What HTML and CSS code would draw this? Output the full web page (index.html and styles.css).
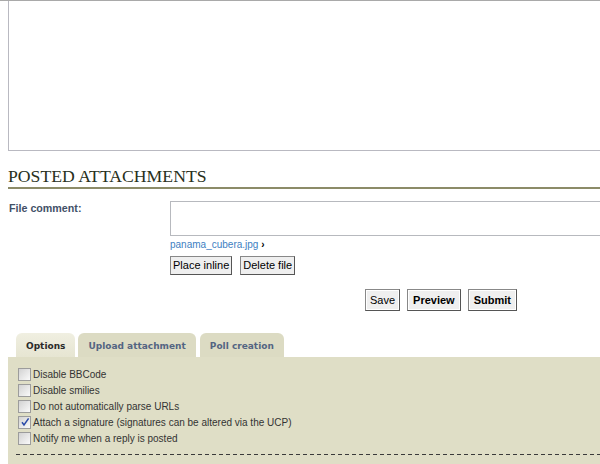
FILE: index.html
```html
<!DOCTYPE html>
<html lang="en">
<head>
  <meta charset="UTF-8" />
  <title>Post a reply</title>
  <link rel="stylesheet" href="styles.css">
</head>
<body>

<div class="top-rule"></div>

<div class="wrap">
  <textarea class="message" aria-label="Message body"></textarea>

  <h3 class="att-title">POSTED ATTACHMENTS</h3>

  <div class="att-row">
    <label class="att-label" for="comment">File comment:</label>
    <div class="att-field">
      <textarea id="comment" class="att-comment"></textarea>
      <div class="att-file">
        <a href="#">panama_cubera.jpg</a>
        <span class="att-arrow">&#x203A;</span>
      </div>
      <div class="att-buttons">
        <button class="btn-small">Place inline</button>
        <button class="btn-small">Delete file</button>
      </div>
    </div>
  </div>

  <div class="submit-buttons">
    <button class="btn">Save</button>
    <button class="btn bold">Preview</button>
    <button class="btn bold">Submit</button>
  </div>

  <ul class="tabs">
    <li class="tab active"><a href="#">Options</a></li>
    <li class="tab"><a href="#">Upload attachment</a></li>
    <li class="tab"><a href="#">Poll creation</a></li>
  </ul>

  <div class="panel">
    <ul class="options">
      <li><span class="box"></span>Disable BBCode</li>
      <li><span class="box"></span>Disable smilies</li>
      <li><span class="box"></span>Do not automatically parse URLs</li>
      <li>
        <span class="box">
          <svg width="10" height="10" viewBox="0 0 10 10"><path d="M2 5.2 L4 8 L8.6 1.4" fill="none" stroke="#2a4aa8" stroke-width="1.5"/></svg>
        </span>Attach a signature (signatures can be altered via the UCP)
      </li>
      <li><span class="box"></span>Notify me when a reply is posted</li>
    </ul>
    <div class="dashed"></div>
  </div>
</div>

</body>
</html>
```

FILE: styles.css
```css
* {
  box-sizing: border-box;
}

html, body {
  margin: 0;
  padding: 0;
  background: #fff;
  overflow: hidden;
  font-family: "Liberation Sans", Arial, sans-serif;
  font-size: 10px;
  color: #333;
}

.top-rule {
  height: 1px;
  background: #a9a9a9;
}

.wrap {
  width: 866px;
  margin-left: 8px;
}

textarea.message {
  display: block;
  width: 900px;
  height: 150px;
  margin: 0;
  border: 1px solid #b9b9c1;
  border-top: none;
  resize: none;
  background: #fff;
}

/* Posted attachments */

.att-title {
  margin: 15px 0 0;
  padding-bottom: 1px;
  font-family: "Liberation Serif", "Times New Roman", serif;
  font-weight: normal;
  font-size: 17.7px;
  line-height: 20px;
  color: #28301c;
  border-bottom: 2px solid #8c8b68;
  width: 900px;
}

.att-row {
  display: grid;
  grid-template-columns: 162px 1fr;
  margin-top: 12px;
}

.att-label {
  padding: 1px 0 0 1px;
  font-weight: bold;
  font-size: 10.7px;
  line-height: 13px;
  color: #425067;
}

.att-comment {
  display: block;
  width: 500px;
  height: 35px;
  margin: 0;
  border: 1px solid #b7b9be;
  resize: none;
}

.att-file {
  margin-top: 2px;
  line-height: 14px;
}

.att-file a {
  color: #3d80c2;
  text-decoration: none;
}

.att-arrow {
  color: #000;
  font-weight: bold;
  font-size: 10px;
}

.att-buttons {
  display: flex;
  gap: 8px;
  margin-top: 4px;
}

.btn-small,
.btn {
  font-family: "Liberation Sans", Arial, sans-serif;
  font-size: 11px;
  color: #000;
  background: #efefef;
  border: 1px solid #666;
  border-color: #888 #555 #555 #888;
  border-radius: 0;
  margin: 0;
}

.btn-small {
  line-height: 13px;
  padding: 2px 2px;
  height: 19px;
}

.submit-buttons {
  display: flex;
  justify-content: center;
  gap: 7px;
  margin-top: 14px;
}

.btn {
  height: 22px;
  line-height: 14px;
  padding: 3px 4px;
  box-shadow: inset 0 0 0 1px #fff;
}

.btn.bold {
  font-weight: bold;
  padding: 3px 5px;
}

/* Tabs */

.tabs {
  list-style: none;
  margin: 22px 0 0;
  padding: 0 0 0 8px;
  display: flex;
  gap: 3px;
}

.tab {
  height: 24px;
  border-radius: 6px 6px 0 0;
  background: #dcdbc3;
}

.tab + .tab + .tab {
  margin-left: 1px;
}

.tab a {
  display: block;
  padding: 0 10px;
  line-height: 26px;
  font-family: "DejaVu Sans", Verdana, sans-serif;
  font-weight: bold;
  font-size: 9px;
  color: #536482;
  text-decoration: none;
}

.tab.active {
  background: linear-gradient(#f0efe1, #e6e5d2);
}

.tab.active a {
  color: #2a2a2a;
  padding: 0 10px;
}

/* Options panel */

.panel {
  background: #dfdec6;
  width: 900px;
  padding: 9px 0 12px 8px;
}

.options {
  list-style: none;
  margin: 0;
  padding: 0;
}

.options li {
  display: flex;
  align-items: center;
  height: 16px;
  font-size: 10px;
  color: #333;
}

.box {
  width: 13px;
  height: 13px;
  margin: 0 2px 0 2px;
  border: 1px solid #9c9c9c;
  background: linear-gradient(135deg, #d2d2d2, #fafafa);
  display: flex;
  align-items: center;
  justify-content: center;
}

.dashed {
  margin-top: 8px;
  height: 1px;
  background: repeating-linear-gradient(90deg, #3a3a3a 0 4px, transparent 4px 7px);
}
```
